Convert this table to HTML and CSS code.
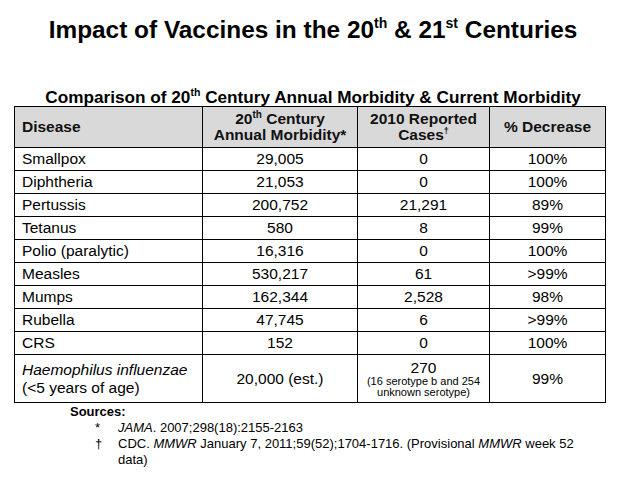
FILE: index.html
```html
<!DOCTYPE html>
<html>
<head>
<meta charset="utf-8">
<link rel="stylesheet" href="styles.css">
</head>
<body>
<div class="page">
  <h1 class="title">Impact of Vaccines in the 20<sup>th</sup> &amp; 21<sup>st</sup> Centuries</h1>
  <h2 class="subtitle">Comparison of 20<sup>th</sup> Century Annual Morbidity &amp; Current Morbidity</h2>
  <table class="data">
    <colgroup>
      <col class="c1"><col class="c2"><col class="c3"><col class="c4">
    </colgroup>
    <thead>
      <tr>
        <th class="left">Disease</th>
        <th>20<sup>th</sup> Century<br>Annual Morbidity*</th>
        <th>2010 Reported<br>Cases<sup class="dag">†</sup></th>
        <th>% Decrease</th>
      </tr>
    </thead>
    <tbody>
      <tr><td class="left">Smallpox</td><td>29,005</td><td>0</td><td>100%</td></tr>
      <tr><td class="left">Diphtheria</td><td>21,053</td><td>0</td><td>100%</td></tr>
      <tr><td class="left">Pertussis</td><td>200,752</td><td>21,291</td><td>89%</td></tr>
      <tr><td class="left">Tetanus</td><td>580</td><td>8</td><td>99%</td></tr>
      <tr><td class="left">Polio (paralytic)</td><td>16,316</td><td>0</td><td>100%</td></tr>
      <tr><td class="left">Measles</td><td>530,217</td><td>61</td><td>&gt;99%</td></tr>
      <tr><td class="left">Mumps</td><td>162,344</td><td>2,528</td><td>98%</td></tr>
      <tr><td class="left">Rubella</td><td>47,745</td><td>6</td><td>&gt;99%</td></tr>
      <tr><td class="left">CRS</td><td>152</td><td>0</td><td>100%</td></tr>
      <tr class="tall">
        <td class="left"><div class="two"><em>Haemophilus influenzae</em><br>(&lt;5 years of age)</div></td>
        <td>20,000 (est.)</td>
        <td><div class="big">270</div><div class="small">(16 serotype b and 254<br>unknown serotype)</div></td>
        <td>99%</td>
      </tr>
    </tbody>
  </table>
  <div class="sources">
    <div class="src-head">Sources:</div>
    <div class="src"><span class="mark">*</span><span class="txt"><em>JAMA</em>. 2007;298(18):2155-2163</span></div>
    <div class="src"><span class="mark">†</span><span class="txt">CDC. <em>MMWR</em> January 7, 2011;59(52);1704-1716. (Provisional <em>MMWR</em> week 52 data)</span></div>
  </div>
</div>
</body>
</html>
```

FILE: styles.css
```css
html, body {
  margin: 0;
  padding: 0;
  background: #fff;
}
body {
  font-family: "Liberation Sans", Arial, sans-serif;
  color: #000;
}
.page {
  width: 626px;
  height: 497px;
  overflow: hidden;
}
.title {
  margin: 0;
  padding-top: 15px;
  height: 30px;
  line-height: 30px;
  font-size: 24.4px;
  font-weight: bold;
  text-align: center;
}
.title sup {
  font-size: 14px;
  line-height: 0;
  vertical-align: 10px;
}
.subtitle {
  margin: 44px 0 0 0;
  height: 17px;
  line-height: 17px;
  font-size: 17.2px;
  font-weight: bold;
  text-align: center;
}
.subtitle sup {
  font-size: 10.5px;
  line-height: 0;
  vertical-align: 7px;
}
.data {
  margin-left: 14px;
  border-collapse: collapse;
  width: 591px;
  table-layout: fixed;
  font-size: 15.5px;
}
.c1 { width: 188px; }
.c2 { width: 155px; }
.c3 { width: 132px; }
.c4 { width: 116px; }
.data th, .data td {
  border: 1px solid #000;
  padding: 0;
  text-align: center;
  vertical-align: middle;
}
.data th {
  background: #d9d9d9;
  height: 40px;
  line-height: 16px;
  font-weight: bold;
  color: #111;
}
.data th sup {
  font-size: 10px;
  line-height: 0;
  vertical-align: 6px;
}
.data th sup.dag {
  font-size: 9px;
}
.data td {
  height: 22px;
  line-height: 18px;
}
.data .left {
  text-align: left;
  padding-left: 7px;
}
.data tr.tall td {
  height: 47px;
}
.two {
  line-height: 18px;
}
.big {
  line-height: 16px;
}
.small {
  font-size: 11px;
  line-height: 11px;
}
.sources {
  padding-left: 70px;
  width: 520px;
  font-size: 13px;
}
.src-head {
  font-weight: bold;
  line-height: 16px;
  margin-top: 1px;
}
.src {
  display: flex;
  line-height: 16px;
}
.mark {
  width: 48px;
  flex: 0 0 48px;
  padding-left: 25px;
  box-sizing: border-box;
}
.txt {
  flex: 1;
}
```
